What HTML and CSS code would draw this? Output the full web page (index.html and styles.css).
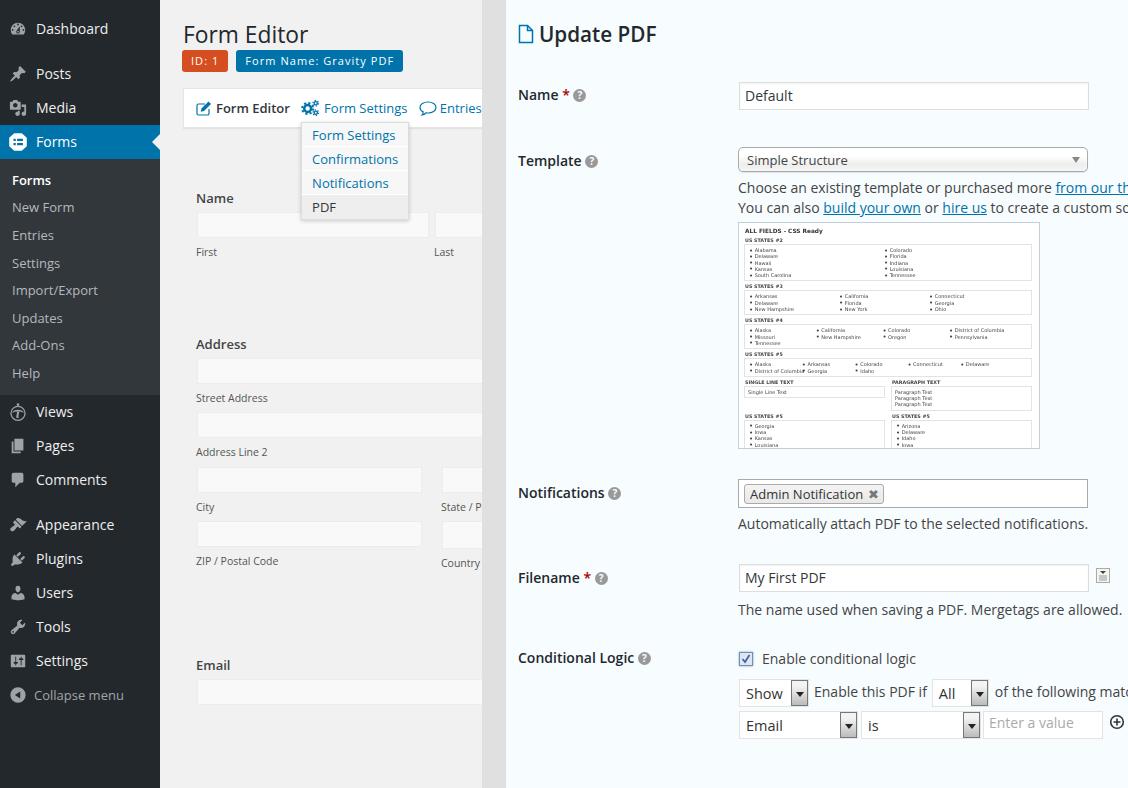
FILE: index.html
```
<!DOCTYPE html>
<html lang="en">
<head>
<meta charset="utf-8">
<title>Update PDF</title>
<link rel="stylesheet" href="styles.css">
</head>
<body>
<div class="app">
  <nav class="sidebar">
    <ul class="menu">
      <li class="item first"><svg class="ico" viewBox="0 0 20 20"><path d="M3.76 16h12.48c1.1-1.37 1.76-3.11 1.76-5 0-4.42-3.58-8-8-8s-8 3.58-8 8c0 1.89.66 3.63 1.76 5zM10 4c.55 0 1 .45 1 1s-.45 1-1 1-1-.45-1-1 .45-1 1-1zM6 6c.55 0 1 .45 1 1s-.45 1-1 1-1-.45-1-1 .45-1 1-1zm8 0c.55 0 1 .45 1 1s-.45 1-1 1-1-.45-1-1 .45-1 1-1zm-5.37 5.55L12 7v6c0 1.1-.9 2-2 2s-2-.9-2-2c0-.57.24-1.08.63-1.45zM4 10c.55 0 1 .45 1 1s-.45 1-1 1-1-.45-1-1 .45-1 1-1zm12 0c.55 0 1 .45 1 1s-.45 1-1 1-1-.45-1-1 .45-1 1-1zm-5 3c0-.55-.45-1-1-1s-1 .45-1 1 .45 1 1 1 1-.45 1-1z" fill-rule="evenodd"/></svg>Dashboard</li>
      <li class="item sep"><svg class="ico" viewBox="0 0 20 20"><path d="M10.44 3.02l1.82-1.82 6.36 6.35-1.83 1.82c-1.05-.68-2.48-.57-3.41.36l-.75.75c-.92.93-1.04 2.35-.35 3.41l-1.83 1.82-2.41-2.41-2.8 2.79c-.42.42-3.38 2.71-3.8 2.29s1.86-3.39 2.28-3.81l2.79-2.79L4.1 9.36l1.83-1.82c1.05.69 2.48.57 3.4-.36l.75-.75c.93-.92 1.05-2.35.36-3.41z"/></svg>Posts</li>
      <li class="item"><svg class="ico" viewBox="0 0 20 20"><path d="M13 11V4c0-.55-.45-1-1-1h-1.67L9 1H5L3.67 3H2c-.55 0-1 .45-1 1v7c0 .55.45 1 1 1h10c.55 0 1-.45 1-1zM7 4.5c1.38 0 2.5 1.12 2.5 2.5S8.38 9.5 7 9.5 4.5 8.38 4.5 7 5.62 4.5 7 4.5zM14 6h5v10.5c0 1.38-1.12 2.5-2.5 2.5S14 17.88 14 16.5s1.12-2.5 2.5-2.5c.17 0 .34.02.5.05V9h-3V6zm-4 8.05V13h2v3.5c0 1.38-1.12 2.5-2.5 2.5S7 17.88 7 16.5 8.12 14 9.5 14c.17 0 .34.02.5.05z"/></svg>Media</li>
      <li class="item current"><svg class="ico" viewBox="0 0 20 20"><path d="M6 1h8l5 4.5v9L14 19H6l-5-4.5v-9z" stroke="#fff" stroke-width="1.5" stroke-linejoin="round"/><path fill="#0073aa" d="M5 6.5h2.500v2.500H5zM9 6.5h6.500v2.500H9zM5 11h2.500v2.500H5zM9 11h6.500v2.500H9z"/></svg>Forms</li>
      <li class="submenu">
        <ul>
          <li class="sub active">Forms</li>
          <li class="sub">New Form</li>
          <li class="sub">Entries</li>
          <li class="sub">Settings</li>
          <li class="sub">Import/Export</li>
          <li class="sub">Updates</li>
          <li class="sub">Add-Ons</li>
          <li class="sub">Help</li>
        </ul>
      </li>
      <li class="item"><svg class="ico" viewBox="0 0 20 20"><circle cx="10" cy="1.800" r="1.500"/><circle cx="10" cy="11.500" r="7.800" fill="none" stroke="#9ea3a8" stroke-width="1.400"/><path d="M3.500 11C4.500 6.500 15.500 6.500 16.500 11 13 8.800 7 8.800 3.500 11z"/><path d="M8.500 9.800l3-.4-1.200 6h1l-.2 1H7.800l1.200-6h-.7z"/></svg>Views</li>
      <li class="item"><svg class="ico" viewBox="0 0 20 20"><path d="M6 15V2h10v13H6zm-1 1h8v2H3V5h2v11z"/></svg>Pages</li>
      <li class="item"><svg class="ico" viewBox="0 0 20 20"><path d="M5 2h9c1.1 0 2 .9 2 2v7c0 1.1-.9 2-2 2h-2l-5 5v-5H5c-1.1 0-2-.9-2-2V4c0-1.1.9-2 2-2z"/></svg>Comments</li>
      <li class="item sep"><svg class="ico" viewBox="0 0 20 20"><path d="M14.48 11.06L7.41 3.99l1.5-1.5c.5-.56 2.3-.47 3.51.32 1.21.8 1.43 1.28 2.91 2.1 1.18.64 2.45 1.26 4.45.85zm-.71.71L6.7 4.7 4.93 6.47c-.39.39-.39 1.02 0 1.41l1.06 1.06c.39.39.39 1.03 0 1.42-.6.6-1.43 1.11-2.21 1.69-.35.26-.7.53-1.01.84C1.43 13.23.78 15.07 2.02 16.3c1.23 1.24 3.07.59 4.42-.75.31-.31.58-.66.84-1.01.58-.78 1.09-1.61 1.69-2.21.39-.39 1.03-.39 1.42 0l1.06 1.06c.39.39 1.02.39 1.41 0z"/></svg>Appearance</li>
      <li class="item"><svg class="ico" viewBox="0 0 20 20"><path d="M13.11 4.36L9.87 7.6 8 5.73l3.24-3.24c.35-.34 1.05-.2 1.56.32.52.51.66 1.21.31 1.55zm-8 1.77l.91-1.12 9.01 9.01-1.19.84c-.71.71-2.63 1.16-3.82 1.16H6.14L4.9 17.26c-.59.59-1.54.59-2.12 0-.59-.58-.59-1.53 0-2.12l1.24-1.24v-3.88c0-1.13.4-3.19 1.09-3.89zm7.26 3.97l3.24-3.24c.34-.35 1.04-.21 1.55.31.52.51.66 1.21.31 1.55l-3.24 3.25z"/></svg>Plugins</li>
      <li class="item"><svg class="ico" viewBox="0 0 20 20"><path d="M10 9.25c-2.27 0-2.73-3.44-2.73-3.44C7 4.02 7.82 2 9.97 2c2.16 0 2.98 2.02 2.71 3.81 0 0-.41 3.44-2.68 3.44zm0 2.57L12.72 10c2.39 0 4.52 2.33 4.52 4.53v2.49s-3.65 1.13-7.24 1.13c-3.65 0-7.24-1.13-7.24-1.13v-2.49c0-2.25 1.94-4.48 4.47-4.48z"/></svg>Users</li>
      <li class="item"><svg class="ico" viewBox="0 0 20 20"><path d="M16.68 9.77c-1.34 1.34-3.3 1.67-4.95.99l-5.41 6.52c-.99.99-2.59.99-3.58 0s-.99-2.59 0-3.57l6.52-5.42c-.68-1.65-.35-3.61.99-4.95 1.28-1.28 3.12-1.62 4.72-1.06l-2.89 2.89 2.82 2.82 2.86-2.87c.53 1.58.18 3.39-1.08 4.65zM3.81 16.21c.4.39 1.04.39 1.43 0 .4-.4.4-1.04 0-1.43-.39-.4-1.03-.4-1.43 0-.39.39-.39 1.03 0 1.43z"/></svg>Tools</li>
      <li class="item"><svg class="ico" viewBox="0 0 20 20"><path d="M18 16V4c0-.55-.45-1-1-1H3c-.55 0-1 .45-1 1v12c0 .55.45 1 1 1h14c.55 0 1-.45 1-1zM8 11h1c.55 0 1 .45 1 1s-.45 1-1 1H8v1.5c0 .28-.22.5-.5.5s-.5-.22-.5-.5V13H6c-.55 0-1-.45-1-1s.45-1 1-1h1V5.5c0-.28.22-.5.5-.5s.5.22.5.5V11zm5-2h-1c-.55 0-1-.45-1-1s.45-1 1-1h1V5.5c0-.28.22-.5.5-.5s.5.22.5.5V7h1c.55 0 1 .45 1 1s-.45 1-1 1h-1v5.5c0 .28-.22.5-.5.5s-.5-.22-.5-.5V9z" fill-rule="evenodd"/></svg>Settings</li>
      <li class="item collapse"><svg class="ico" viewBox="0 0 20 20"><path d="M10 1.5a8.500 8.500 0 1 1 0 17 8.500 8.500 0 0 1 0-17zM12.500 6l-6 4 6 4z" fill-rule="evenodd"/></svg>Collapse menu</li>
    </ul>
  </nav>

  <main class="editor">
    <h1 class="editor-title">Form Editor</h1>
    <div class="badges">
      <span class="badge badge-id">ID: 1</span>
      <span class="badge badge-name">Form Name: Gravity PDF</span>
    </div>
    <div class="toolbar">
      <span class="tool tool-current">
        <svg class="tool-ico" viewBox="0 0 18 18" fill="none" stroke="#0073aa" stroke-width="1.2"><path d="M14 10v4.500a1.500 1.500 0 0 1-1.500 1.500h-9A1.500 1.500 0 0 1 2 14.500v-8A1.500 1.500 0 0 1 3.500 5H10"/><path fill="#0073aa" stroke="none" d="M6.500 9.500l7-7 2.500 2.500-7 7-3.300.8z"/></svg>Form Editor
      </span>
      <span class="tool tool-settings">
        <svg class="tool-ico" viewBox="0 0 20 18" fill="none" stroke="#0073aa"><circle cx="7" cy="9.500" r="3.600" stroke-width="2.600"/><circle cx="7" cy="9.500" r="5.800" stroke-width="2" stroke-dasharray="2.300 2.250"/><circle cx="15.500" cy="4" r="1.700" stroke-width="1.500"/><circle cx="15.500" cy="4" r="3" stroke-width="1.200" stroke-dasharray="1.400 1.750"/><circle cx="15.500" cy="14" r="1.700" stroke-width="1.500"/><circle cx="15.500" cy="14" r="3" stroke-width="1.200" stroke-dasharray="1.400 1.750"/></svg>Form Settings
        <ul class="dropdown">
          <li>Form Settings</li>
          <li>Confirmations</li>
          <li>Notifications</li>
          <li class="dropdown-active">PDF</li>
        </ul>
      </span>
      <span class="tool">
        <svg class="tool-ico" viewBox="0 0 18 18" fill="none" stroke="#0073aa" stroke-width="1.2"><path d="M9 3c4.400 0 8 2.400 8 5.500S13.400 14 9 14c-.7 0-1.300 0-2-.2C6 15 4.800 15.800 3 16c.8-1 1.200-2 1.200-3.100C2.200 11.900 1 10.300 1 8.500 1 5.400 4.600 3 9 3z"/></svg>Entries
      </span>
    </div>

    <section class="form-preview">
      <h2 class="fp-label fp-name">Name</h2>
      <div class="fp-cols fp-cols-name">
        <div><div class="fp-input"></div><span class="fp-sub">First</span></div>
        <div><div class="fp-input"></div><span class="fp-sub">Last</span></div>
      </div>
      <h2 class="fp-label fp-address">Address</h2>
      <div class="fp-input fp-wide"></div>
      <span class="fp-sub">Street Address</span>
      <div class="fp-input fp-wide"></div>
      <span class="fp-sub">Address Line 2</span>
      <div class="fp-cols fp-cols-addr fp-city">
        <div><div class="fp-input"></div><span class="fp-sub">City</span></div>
        <div><div class="fp-input"></div><span class="fp-sub">State / Province</span></div>
      </div>
      <div class="fp-cols fp-cols-addr">
        <div><div class="fp-input"></div><span class="fp-sub">ZIP / Postal Code</span></div>
        <div><div class="fp-input fp-tall"></div><span class="fp-sub">Country</span></div>
      </div>
      <h2 class="fp-label fp-email">Email</h2>
      <div class="fp-input fp-wide"></div>
    </section>
  </main>

  <div class="gutter"></div>

  <section class="panel">
    <h1 class="panel-title"><svg class="file-ico" viewBox="0 0 16 20" fill="none" stroke="#0073aa" stroke-width="1.5"><path d="M1.500 1.500h8l5 5v12h-13z"/><path d="M9.500 1.500v5h5"/></svg>Update PDF</h1>

    <div class="row row-name">
      <div class="label">Name <span class="req">*</span> <span class="help">?</span></div>
      <div class="field"><input class="text" type="text" value="Default"></div>
    </div>

    <div class="row row-template">
      <div class="label">Template <span class="help">?</span></div>
      <div class="field">
        <div class="gradient-select">Simple Structure<span class="caret"></span></div>
        <p class="desc desc-template">Choose an existing template or purchased more <a href="#">from our theme shop</a>.<br>You can also <a href="#">build your own</a> or <a href="#">hire us</a> to create a custom solution.</p>
        <div class="thumb">
          <div class="th-title">ALL FIELDS - CSS Ready</div>
          <div class="th-head">US STATES #2</div>
          <div class="th-box th-c2"><span>Alabama</span><span>Colorado</span><span>Delaware</span><span>Florida</span><span>Hawaii</span><span>Indiana</span><span>Kansas</span><span>Louisiana</span><span>South Carolina</span><span>Tennessee</span></div>
          <div class="th-head">US STATES #3</div>
          <div class="th-box th-c3"><span>Arkansas</span><span>California</span><span>Connecticut</span><span>Delaware</span><span>Florida</span><span>Georgia</span><span>New Hampshire</span><span>New York</span><span>Ohio</span></div>
          <div class="th-head">US STATES #4</div>
          <div class="th-box th-c4"><span>Alaska</span><span>California</span><span>Colorado</span><span>District of Columbia</span><span>Missouri</span><span>New Hampshire</span><span>Oregon</span><span>Pennsylvania</span><span>Tennessee</span></div>
          <div class="th-head">US STATES #5</div>
          <div class="th-box th-c5"><span>Alaska</span><span>Arkansas</span><span>Colorado</span><span>Connecticut</span><span>Delaware</span><span>District of Columbia</span><span>Georgia</span><span>Idaho</span></div>
          <div class="th-split">
            <div><div class="th-head">SINGLE LINE TEXT</div><div class="th-box th-plain">Single Line Text</div></div>
            <div><div class="th-head">PARAGRAPH TEXT</div><div class="th-box th-plain">Paragraph Text<br>Paragraph Text<br>Paragraph Text</div></div>
          </div>
          <div class="th-split">
            <div><div class="th-head">US STATES #5</div><div class="th-box th-c1"><span>Georgia</span><span>Iowa</span><span>Kansas</span><span>Louisiana</span></div></div>
            <div><div class="th-head">US STATES #5</div><div class="th-box th-c1"><span>Arizona</span><span>Delaware</span><span>Idaho</span><span>Iowa</span></div></div>
          </div>
        </div>
      </div>
    </div>

    <div class="row row-notify">
      <div class="label">Notifications <span class="help">?</span></div>
      <div class="field">
        <div class="chosen"><span class="chip">Admin Notification <span class="chip-x">&#10006;</span></span></div>
        <p class="desc desc-notify">Automatically attach PDF to the selected notifications.</p>
      </div>
    </div>

    <div class="row row-filename">
      <div class="label">Filename <span class="req">*</span> <span class="help">?</span></div>
      <div class="field">
        <div class="with-tag">
          <input class="text" type="text" value="My First PDF">
          <svg class="tag-ico" viewBox="0 0 14 15"><rect x=".5" y=".5" width="13" height="14" fill="#f4f4f0" stroke="#aaa"/><path d="M4 3h6L7 6z" fill="#444"/><path d="M3 8h8M3 10h8M3 12h8" stroke="#999"/></svg>
        </div>
        <p class="desc desc-file">The name used when saving a PDF. Mergetags are allowed.</p>
      </div>
    </div>

    <div class="row row-logic">
      <div class="label">Conditional Logic <span class="help">?</span></div>
      <div class="field">
        <div class="enable"><span class="check"><svg viewBox="0 0 12 12"><path d="M2.500 6l2.500 3 4.500-7" fill="none" stroke="#3b5fb0" stroke-width="1.7"/></svg></span>Enable conditional logic</div>
        <div class="logic logic-one">
          <span class="sel sel-show">Show<i class="sel-arrow"></i></span>
          <span class="logic-text">Enable this PDF if</span>
          <span class="sel sel-all">All<i class="sel-arrow"></i></span>
          <span class="logic-text logic-tail">of the following match:</span>
        </div>
        <div class="logic logic-two">
          <span class="sel sel-field">Email<i class="sel-arrow"></i></span>
          <span class="sel sel-op">is<i class="sel-arrow"></i></span>
          <input class="value" type="text" placeholder="Enter a value">
          <svg class="plus" viewBox="0 0 16 16" fill="none" stroke="#333" stroke-width="1.6"><circle cx="8" cy="8" r="6.300"/><path d="M4.500 8h7M8 4.500v7"/></svg>
        </div>
      </div>
    </div>
  </section>
</div>
</body>
</html>
```

FILE: styles.css
```
* { box-sizing: border-box; }
html, body { margin: 0; height: 100%; overflow: hidden; }
body { font: 14px/20px "Open Sans", sans-serif; color: #444; background: #f1f1f1; }
ul { list-style: none; margin: 0; padding: 0; }
h1, h2, p { margin: 0; }
a { color: #0073aa; }

.app { display: flex; height: 788px; overflow: hidden; }

/* sidebar */
.sidebar { width: 160px; flex: none; background: #23282d; }
.item { display: flex; align-items: center; height: 34px; padding-left: 9px; color: #eee; font-size: 14px; white-space: nowrap; }
.item.first { margin-top: 12px; }
.item.sep { margin-top: 11px; }
.ico { width: 18px; height: 18px; margin-right: 9px; fill: #9ea3a8; flex: none; }
.current { position: relative; background: #0073aa; color: #fff; }
.current .ico { fill: #fff; }
.current::after { content: ""; position: absolute; right: 0; top: 9px; border: 8px solid transparent; border-right-color: #f1f1f1; border-left: 0; }
.submenu { background: #32373c; padding: 7.9px 0 0; height: 236px; }
.sub { height: 27.6px; line-height: 27.6px; padding-left: 12px; font-size: 13px; color: #b4b9be; }
.sub.active { color: #fff; font-weight: 600; }
.collapse { color: #a0a5aa; font-size: 13px; padding-left: 9px; }
.collapse .ico { margin-right: 7px; }

/* form editor column */
.editor { width: 322px; flex: none; padding: 20px 0 0 23px; overflow: hidden; }
.editor-title { font-size: 22.8px; line-height: 30px; font-weight: 400; color: #23282d; }
.badges { display: flex; gap: 8px; margin: 0 0 0 -1px; }
.badge { height: 22px; line-height: 22px; padding: 0 9px; border-radius: 3px; color: #fff; font-size: 11px; font-weight: 400; letter-spacing: 1.05px; white-space: nowrap; }
.badge-id { background: #d54e21; }
.badge-name { background: #0073aa; }

.toolbar { display: flex; align-items: center; gap: 11.2px; height: 40px; margin-top: 16px; padding-left: 11px; width: 340px; background: #fff; border: 1px solid #e5e5e5; box-shadow: 0 1px 1px rgba(0,0,0,.06); white-space: nowrap; color: #0073aa; font-size: 13px; }
.tool { position: relative; display: flex; align-items: center; }
.tool-current { color: #32373c; font-weight: 600; }
.tool-ico { width: 18px; height: 18px; margin-right: 3px; flex: none; }
.tool-settings .tool-ico { width: 19px; margin-right: 4px; }
.dropdown { position: absolute; left: 0; top: 24px; width: 108px; background: #f7f7f7; border: 1px solid #ddd; box-shadow: 0 1px 4px rgba(0,0,0,.2); font-weight: 400; font-size: 13px; z-index: 2; }
.dropdown li { height: 24px; line-height: 25px; padding-left: 10px; border-bottom: 1px solid #fff; }
.dropdown .dropdown-active { background: #eee; color: #32373c; border-bottom: 0; }

.form-preview { padding-left: 13px; width: 330px; }
.fp-label { font-size: 13px; line-height: 18px; font-weight: 600; color: #444; }
.fp-name { margin-top: 61px; }
.fp-address { margin-top: 75px; }
.fp-email { margin-top: 85px; }
.fp-input { height: 26px; margin: 5px 0 0 1px; background: #f9f9f9; border: 1px solid #ececec; }
.fp-tall { height: 28px; }
.fp-wide { margin-top: 5px; width: 320px; }
.fp-sub { display: block; height: 16px; margin-top: 6px; font-size: 10.5px; line-height: 16px; color: #555; white-space: nowrap; }
.fp-sub + .fp-wide { margin-top: 6px; }
.fp-cols { display: grid; }
.fp-cols-name { grid-template-columns: 233px 80px; gap: 5px; }
.fp-cols-addr { grid-template-columns: 226px 80px; gap: 19px; margin-top: 6px; }
.fp-city { margin-top: 2px; }
.fp-cols-addr:not(.fp-city) .fp-input { margin-top: 0; }
.fp-city .fp-input { margin-top: 5px; }

.gutter { width: 24px; flex: none; background: #e0e0e0; }

/* settings panel */
.panel { flex: 1; min-width: 0; overflow: hidden; padding: 20px 0 0 12px; background: #f7fcff; }
.panel-title { display: flex; align-items: center; font-size: 20.7px; line-height: 28px; font-weight: 600; color: #23282d; white-space: nowrap; }
.file-ico { width: 16px; height: 20px; margin-right: 5px; }
.row { display: grid; grid-template-columns: 220px minmax(0, 1fr); }
.label { font-weight: 600; color: #23282d; padding-top: 4px; white-space: nowrap; }
.req { color: #a00; }
.help { display: inline-block; width: 13px; height: 13px; border-radius: 50%; background: #999; color: #f7fcff; font-size: 10px; line-height: 13px; font-weight: 700; text-align: center; vertical-align: 1px; }
.desc { white-space: nowrap; color: #444; }
.text { display: block; width: 350px; height: 28px; margin-left: 1px; padding: 0 5px 2px; background: #fff; border: 1px solid #ddd; box-shadow: inset 0 1px 2px rgba(0,0,0,.05); font: 14px "Open Sans", sans-serif; color: #32373c; }

.row-name { margin-top: 34px; }
.row-name .label { padding-top: 3px; }
.row-template { margin-top: 37px; }
.row-notify { margin-top: 30px; }
.row-filename { margin-top: 30px; }
.row-logic { margin-top: 29px; }
.row-logic .label { padding-top: 0; margin-top: -1px; }

.gradient-select { position: relative; width: 350px; height: 25px; line-height: 24px; padding-left: 8px; border: 1px solid #aaa; border-radius: 5px; background: linear-gradient(#fff 35%, #eee 70%, #f4f4f4); box-shadow: 0 0 3px #fff inset, 0 1px 1px rgba(0,0,0,.1); font-size: 13px; color: #444; }
.caret { position: absolute; right: 7px; top: 9px; border: 4px solid transparent; border-top: 6px solid #888; border-bottom: 0; }
.desc-template { margin-top: 6px; }
.desc-notify { margin-top: 6px; }
.desc-file { margin-top: 8px; }

.thumb { width: 302px; height: 227px; margin-top: 4px; padding: 5px 7px 0 5px; overflow: hidden; background: #fff; border: 1px solid #c5ced6; font: 5px/6.3px "DejaVu Sans", sans-serif; color: #444; filter: blur(.25px); }
.th-title { margin-left: 1px; font-size: 5.8px; line-height: 7px; font-weight: 700; color: #333; }
.th-head { margin: 3px 0 0 1px; font-size: 4.8px; line-height: 6px; font-weight: 700; color: #444; white-space: nowrap; }
.th-box { display: grid; width: 288px; padding: 2px 2px 2px 4px; background: #fff; border: 1px solid #e3e3e3; white-space: nowrap; grid-auto-rows: 6.3px; }
.th-box span::before { content: "\2022"; margin-right: 1.5px; font-size: 7px; line-height: 5px; vertical-align: -.5px; }
.th-c1 { width: 141px; grid-template-columns: 1fr; }
.th-c2 { grid-template-columns: repeat(2, 135px); }
.th-c3 { grid-template-columns: repeat(3, 90px); }
.th-c4 { grid-template-columns: repeat(4, 66.7px); }
.th-c5 { grid-template-columns: repeat(5, 52.8px); }
.th-plain { display: block; width: 141px; padding-left: 3px; line-height: 6.3px; }
.th-split { display: grid; grid-template-columns: 141px 141px; gap: 6px; }

.chosen { display: flex; align-items: center; width: 350px; height: 29px; padding-left: 5px; background: #fff; border: 1px solid #aaa; }
.chip { display: block; height: 20px; line-height: 18px; padding: 0 4px 0 5px; border: 1px solid #aaa; border-radius: 3px; background: linear-gradient(#f4f4f4, #e8e8e8); color: #333; font-size: 13px; white-space: nowrap; }
.chip-x { margin-left: 1px; font-size: 13px; color: #777; }

.with-tag { display: flex; align-items: flex-start; }
.tag-ico { width: 14px; height: 15px; margin: 4px 0 0 7px; flex: none; }

.enable { display: flex; align-items: center; color: #444; white-space: nowrap; }
.check { display: block; width: 14px; height: 14px; margin: 0 9px 0 1px; background: #dfe6f0; border: 1px solid #7a8ba5; box-shadow: 0 0 2px #6aa7d8; }
.check svg { display: block; width: 12px; height: 12px; }
.logic { display: flex; white-space: nowrap; margin-left: 1px; }
.logic-one { margin-top: 10px; height: 28px; }
.logic-two { margin-top: 4px; height: 28px; align-items: flex-start; }
.logic-text { flex: none; margin-left: 5px; line-height: 26px; }
.logic-tail { margin-left: 6px; }
.sel { position: relative; flex: none; display: block; height: 28px; line-height: 28px; padding-left: 6px; background: #fff; border: 1px solid #e3e3e3; font-size: 14.5px; color: #333; }
.sel-arrow { position: absolute; right: 0; top: 0; bottom: 0; width: 17px; border: 1px solid #777; background: linear-gradient(#f4f4f4 20%, #bbb); }
.sel-arrow::after { content: ""; position: absolute; left: 4px; top: 11px; border: 4px solid transparent; border-top: 5px solid #222; border-bottom: 0; }
.sel-show { width: 70px; }
.sel-all { width: 57px; margin-left: 5px; }
.sel-field { width: 119px; }
.sel-op { width: 120px; margin-left: 3px; }
.value { flex: none; width: 120px; height: 28px; margin-left: 2px; padding: 0 5px 6px; background: #fff; border: 1px solid #e3e3e3; font: 14px "Open Sans", sans-serif; }
.value::placeholder { color: #aaa; opacity: 1; }
.plus { width: 16px; height: 16px; margin: 3px 0 0 6px; flex: none; }
```
